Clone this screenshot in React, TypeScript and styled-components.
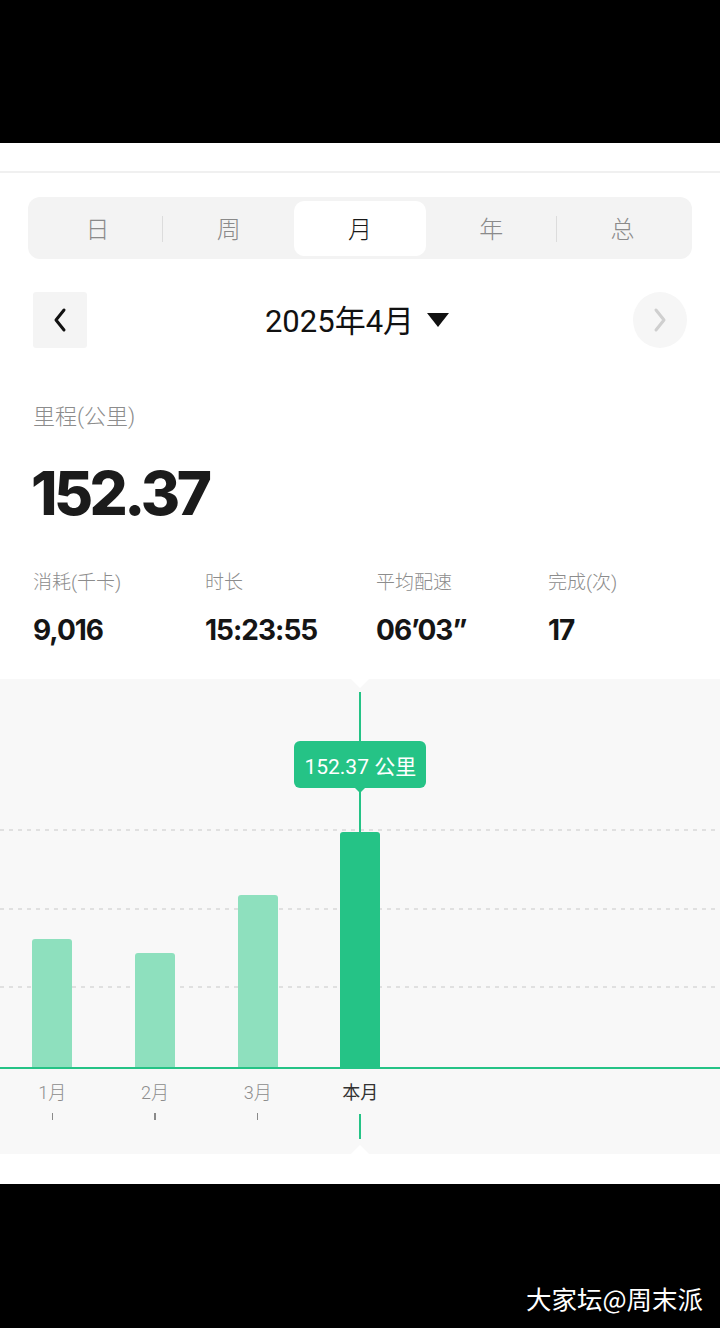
import React from 'react';
import styled, {createGlobalStyle} from 'styled-components';

const GlobalStyle = createGlobalStyle`
  html, body {
    margin: 0;
    padding: 0;
    background: #000;
  }
  body {
    font-family: Roboto, "Noto Sans CJK SC", sans-serif;
  }
`

const GREEN = '#25c386';
const LIGHT_GREEN = '#8ee0be';
const CJK = `Roboto, "Noto Sans CJK SC", sans-serif`;
const NUM = `Inter, "Noto Sans CJK SC", sans-serif`;

const Page = styled.div`
  width: 720px;
  height: 1328px;
  display: flex;
  flex-direction: column;
  background: #000;
  overflow: hidden;
`

const BlackBar = styled.div<{ h?: number }>`
  height: ${p => p.h ? `${p.h}px` : 'auto'};
  flex: ${p => p.h ? '0 0 auto' : '1'};
  background: #000;
  position: relative;
`

const Screen = styled.div`
  background: #fff;
  display: flex;
  flex-direction: column;
  padding-bottom: 30px;
`

const TopStrip = styled.div`
  height: 28px;
  border-bottom: 2px solid #f0f0f0;
`

const Segment = styled.div`
  margin: 24px 28px 0;
  height: 62px;
  box-sizing: border-box;
  padding: 4px 4px 3px;
  background: #f3f3f3;
  border-radius: 12px;
  display: flex;
`

const Tab = styled.div<{ active?: boolean; divider?: boolean }>`
  flex: 1;
  position: relative;
  display: flex;
  align-items: center;
  justify-content: center;
  font-family: ${CJK};
  font-size: 24px;
  font-weight: 300;
  color: ${p => p.active ? '#1a1a1a' : '#8a8a8a'};
  background: ${p => p.active ? '#fff' : 'transparent'};
  border-radius: 10px;
  padding-bottom: 3px;

  &::after {
    content: "";
    display: ${p => p.divider ? 'block' : 'none'};
    position: absolute;
    right: 0;
    top: 15px;
    bottom: 14px;
    width: 1px;
    background: #dcdcdc;
  }
`

const NavRow = styled.div`
  margin: 33px 33px 0;
  height: 56px;
  display: flex;
  align-items: center;
  justify-content: space-between;
`

const NavButton = styled.div<{ round?: boolean; muted?: boolean }>`
  width: 54px;
  height: 56px;
  border-radius: ${p => p.round ? '50%' : '3px'};
  background: ${p => p.round ? '#f6f6f6' : '#f4f4f4'};
  display: flex;
  align-items: center;
  justify-content: center;
  color: ${p => p.muted ? '#cfcfcf' : '#111'};
`

const Title = styled.div`
  display: flex;
  align-items: center;
  gap: 13px;
  font-family: ${CJK};
  font-size: 31px;
  color: #111;
  margin-left: -6px;
  padding-bottom: 3px;
`

const Caret = styled.span`
  width: 0;
  height: 0;
  border-left: 11px solid transparent;
  border-right: 11px solid transparent;
  border-top: 14px solid #111;
  margin-top: 2px;
`

const Summary = styled.div`
  padding: 0 33px;
  display: flex;
  flex-direction: column;
`

const Label = styled.div<{ size?: number }>`
  font-family: ${CJK};
  font-size: ${p => p.size || 19}px;
  font-weight: 300;
  color: #8c8c8c;
`

const MileageLabel = styled(Label)`
  margin-top: 50px;
`

const BigNumber = styled.div`
  font-family: ${NUM};
  font-weight: 800;
  font-size: 60px;
  letter-spacing: -3.5px;
  color: #1b1b1b;
  line-height: 1;
  margin-top: 33px;
  margin-left: -2px;
`

const Stats = styled.div`
  margin-top: 44px;
  display: grid;
  grid-template-columns: 172px 171px 172px 1fr;
`

const Stat = styled.div`
  display: flex;
  flex-direction: column;
  gap: 22px;
`

const StatValue = styled.div`
  font-family: ${NUM};
  font-weight: 700;
  font-size: 28px;
  letter-spacing: -1px;
  color: #151515;
  line-height: 1;
`

const Chart = styled.div`
  margin-top: 35px;
  height: 475px;
  background: #f8f8f8;
  position: relative;
  display: flex;
  flex-direction: column;

  &::before, &::after {
    content: "";
    position: absolute;
    left: 351px;
    width: 0;
    height: 0;
    border-left: 9px solid transparent;
    border-right: 9px solid transparent;
  }
  &::before {
    top: 0;
    border-top: 9px solid #fff;
  }
  &::after {
    bottom: 0;
    border-bottom: 9px solid #fff;
  }
`

const Plot = styled.div`
  height: 390px;
  box-sizing: border-box;
  border-bottom: 2px solid ${GREEN};
  position: relative;
  display: flex;
  align-items: flex-end;
  padding-left: 1px;
`

const GridLine = styled.div<{ top: number }>`
  position: absolute;
  left: 0;
  right: 0;
  top: ${p => p.top}px;
  height: 2px;
  background: repeating-linear-gradient(90deg, #e0e0e0 0 4px, transparent 4px 9px);
`

const Column = styled.div`
  width: 102.67px;
  display: flex;
  flex-direction: column;
  align-items: center;
  position: relative;
  z-index: 1;
`

const Bar = styled.div<{ current?: boolean }>`
  width: 40px;
  background: ${p => p.current ? GREEN : LIGHT_GREEN};
  border-radius: 3px 3px 0 0;
`

const Guide = styled.div`
  position: absolute;
  left: 50%;
  width: 2px;
  margin-left: -1px;
  background: ${GREEN};
`

const Tooltip = styled.div`
  position: absolute;
  left: 50%;
  transform: translateX(-50%);
  height: 47px;
  width: 132px;
  border-radius: 6px;
  background: ${GREEN};
  color: #fff;
  font-family: ${CJK};
  font-size: 21px;
  white-space: nowrap;
  display: flex;
  align-items: center;
  justify-content: center;

  &::after {
    content: "";
    position: absolute;
    left: 50%;
    bottom: -5px;
    margin-left: -5px;
    border-left: 5px solid transparent;
    border-right: 5px solid transparent;
    border-top: 5px solid ${GREEN};
  }
`

const Axis = styled.div`
  display: flex;
  padding-left: 1px;
`

const AxisItem = styled.div`
  width: 102.67px;
  display: flex;
  flex-direction: column;
  align-items: center;
  padding-top: 12px;
`

const AxisLabel = styled.div<{ current?: boolean }>`
  font-family: ${CJK};
  font-size: 18px;
  font-weight: ${p => p.current ? 400 : 300};
  color: ${p => p.current ? '#333' : '#8c8c8c'};
  line-height: 24px;
`

const Tick = styled.div<{ current?: boolean }>`
  margin-top: ${p => p.current ? 9 : 8}px;
  width: ${p => p.current ? 2 : 1.5}px;
  height: ${p => p.current ? 25 : 7}px;
  background: ${p => p.current ? GREEN : '#8a8a8a'};
`

const Watermark = styled.div`
  position: absolute;
  right: 17px;
  bottom: 14px;
  font-family: "Noto Sans CJK SC", sans-serif;
  font-size: 25.5px;
  line-height: 32px;
  color: #fff;
`

const Chevron = ({dir}: { dir: 'left' | 'right' }) => (
    <svg width="16" height="26" viewBox="0 0 16 26" fill="none">
        <path d={dir === 'left' ? 'M12 3 L4 13 L12 23' : 'M4 3 L12 13 L4 23'}
              stroke="currentColor" strokeWidth="3" strokeLinecap="round" strokeLinejoin="round"/>
    </svg>
);

const tabs = ['日', '周', '月', '年', '总'];
const activeTab = 2;

const stats = [
    {label: '消耗(千卡)', value: '9,016'},
    {label: '时长', value: '15:23:55'},
    {label: '平均配速', value: '06\u201903\u201d'},
    {label: '完成(次)', value: '17'},
];

const PLOT_H = 388;

const months = [
    {label: '1月', height: 128},
    {label: '2月', height: 114},
    {label: '3月', height: 172},
    {label: '本月', height: 235, current: true},
];

const App = () => {
    return (
        <Page>
            <GlobalStyle/>
            <BlackBar h={143}/>
            <Screen>
                <TopStrip/>
                <Segment>
                    {tabs.map((t, i) => (
                        <Tab key={t} active={i === activeTab}
                             divider={i !== tabs.length - 1 && i !== activeTab && i + 1 !== activeTab}>
                            {t}
                        </Tab>
                    ))}
                </Segment>
                <NavRow>
                    <NavButton><Chevron dir="left"/></NavButton>
                    <Title>2025年4月<Caret/></Title>
                    <NavButton round muted><Chevron dir="right"/></NavButton>
                </NavRow>
                <Summary>
                    <MileageLabel size={22}>里程(公里)</MileageLabel>
                    <BigNumber>152.37</BigNumber>
                    <Stats>
                        {stats.map(s => (
                            <Stat key={s.label}>
                                <Label>{s.label}</Label>
                                <StatValue>{s.value}</StatValue>
                            </Stat>
                        ))}
                    </Stats>
                </Summary>
                <Chart>
                    <Plot>
                        <GridLine top={150}/>
                        <GridLine top={229}/>
                        <GridLine top={307}/>
                        {months.map(m => {
                            // offsets measured from the top of the plot, turned into column coordinates
                            const shift = PLOT_H - m.height;
                            return (
                                <Column key={m.label}>
                                    {m.current && (
                                        <>
                                            <Guide style={{top: 13 - shift, height: 49}}/>
                                            <Guide style={{top: 109 - shift, height: 44}}/>
                                            <Tooltip style={{top: 62 - shift}}>152.37 公里</Tooltip>
                                        </>
                                    )}
                                    <Bar current={m.current} style={{height: m.height}}/>
                                </Column>
                            );
                        })}
                    </Plot>
                    <Axis>
                        {months.map(m => (
                            <AxisItem key={m.label}>
                                <AxisLabel current={m.current}>{m.label}</AxisLabel>
                                <Tick current={m.current}/>
                            </AxisItem>
                        ))}
                    </Axis>
                </Chart>
            </Screen>
            <BlackBar>
                <Watermark>大家坛@周末派</Watermark>
            </BlackBar>
        </Page>
    );
};

export default App;
